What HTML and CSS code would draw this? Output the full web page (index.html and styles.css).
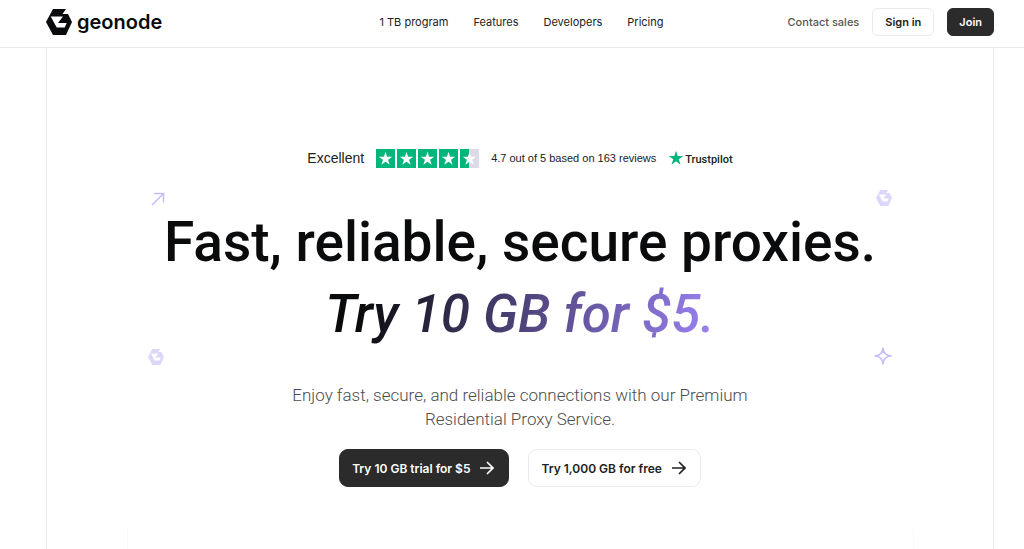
FILE: index.html
```html
<!DOCTYPE html>
<html lang="en">
<head>
<meta charset="utf-8">
<meta name="viewport" content="width=device-width, initial-scale=1">
<title>Geonode</title>
<link rel="stylesheet" href="styles.css">
</head>
<body>
<svg class="symbols" aria-hidden="true">
  <symbol id="mark" viewBox="0 0 26 26">
    <path fill="currentColor" fill-rule="evenodd" d="M7 0H20L16.500 5H22L26 13L20 26H7L0 13ZM4.700 7.500L10.700 18.500H18.700L20.700 14H12L17 7.500Z"/>
  </symbol>
  <symbol id="star" viewBox="0 0 20 20">
    <path fill="currentColor" d="M10 1l2.100 6.600H19l-5.600 4 2.200 6.700L10 14.200l-5.600 4.100 2.200-6.700L1 7.600h6.900Z"/>
  </symbol>
  <symbol id="arrow" viewBox="0 0 14 14">
    <path fill="none" stroke="currentColor" stroke-width="1.700" d="M0 7H13M7 1l6 6-6 6"/>
  </symbol>
</svg>
<header class="header">
  <div class="bar">
    <a class="brand" href="#"><svg class="brand-mark" aria-hidden="true"><use href="#mark"/></svg>geonode</a>
    <nav class="nav" aria-label="Main">
      <a href="#">1 TB program</a>
      <a href="#">Features</a>
      <a href="#">Developers</a>
      <a href="#">Pricing</a>
    </nav>
    <div class="account">
      <a class="contact" href="#">Contact sales</a>
      <button class="button small" type="button">Sign in</button>
      <button class="button small dark" type="button">Join</button>
    </div>
  </div>
</header>
<main class="frame">
  <div class="rating">
    <span class="verdict">Excellent</span>
    <span class="stars" role="img" aria-label="4.7 stars">
      <svg><use href="#star"/></svg><svg><use href="#star"/></svg><svg><use href="#star"/></svg><svg><use href="#star"/></svg><svg class="half"><use href="#star"/></svg>
    </span>
    <span class="score">4.7 out of 5 based on 163 reviews</span>
    <a class="trustpilot" href="#"><svg aria-hidden="true"><use href="#star"/></svg><span>Trustpilot</span></a>
  </div>
  <div class="hero">
    <svg class="deco top-left" viewBox="0 0 18 18" aria-hidden="true"><path fill="none" stroke="currentColor" stroke-width="1.500" d="M4 15L15 4M6 3.500h9.500v9"/></svg>
    <svg class="deco top-right" aria-hidden="true"><use href="#mark"/></svg>
    <svg class="deco bottom-left" aria-hidden="true"><use href="#mark"/></svg>
    <svg class="deco bottom-right" viewBox="0 0 18 18" aria-hidden="true"><path fill="none" stroke="currentColor" stroke-width="1.700" stroke-linejoin="round" d="M9 1Q9.500 8.500 17 9Q9.500 9.500 9 17Q8.500 9.500 1 9Q8.500 8.500 9 1Z"/></svg>
    <h1>Fast, reliable, secure proxies.<br><em>Try 10 GB for $5.</em></h1>
  </div>
  <p class="lead">Enjoy fast, secure, and reliable connections with our Premium Residential Proxy Service.</p>
  <div class="actions">
    <button class="button large dark" type="button">Try 10 GB trial for $5<svg aria-hidden="true"><use href="#arrow"/></svg></button>
    <button class="button large" type="button">Try 1,000 GB for free<svg aria-hidden="true"><use href="#arrow"/></svg></button>
  </div>
  <div class="panel"></div>
</main>
</body>
</html>
```
FILE: styles.css
```css
* { box-sizing: border-box; }
body {
  margin: 0;
  min-height: 100vh;
  display: flex;
  flex-direction: column;
  font-family: Inter, "Open Sans", sans-serif;
  color: #212121;
  background: #fff;
}
a { color: inherit; text-decoration: none; }
.symbols { position: absolute; width: 0; height: 0; }
.header { border-bottom: 1px solid #ebebeb; padding: 0 30px 0 46px; }
.bar {
  display: grid;
  grid-template-columns: 1fr auto 1fr;
  align-items: center;
  height: 47px;
  padding-bottom: 3px;
}
.brand {
  display: flex;
  align-items: center;
  gap: 5px;
  font-size: 20px;
  font-weight: 600;
  line-height: 24px;
  color: #090b0c;
}
.brand-mark { width: 26px; height: 26px; }
.nav { display: flex; gap: 25px; padding-left: 3px; font-size: 11px; line-height: 16px; }
.account { display: flex; justify-content: flex-end; align-items: center; gap: 13px; }
.contact { font-size: 11px; font-weight: 500; color: #555; }
.button {
  display: inline-flex;
  align-items: center;
  justify-content: center;
  font-family: inherit;
  font-weight: 600;
  color: #212121;
  background: #fff;
  border: 1px solid #ebebeb;
  border-radius: 6px;
  cursor: pointer;
  white-space: nowrap;
}
.dark { color: #fff; background: #2b2b2b; border-color: #2b2b2b; }
.small { height: 28px; padding: 0 12px; font-size: 11px; }
.small.dark { padding: 0 11px; }
.large { height: 38px; padding: 0 14px 0 12px; gap: 10px; font-size: 12px; border-radius: 9px; }
.large svg { width: 14px; height: 14px; }
.frame {
  flex: 1;
  display: flex;
  flex-direction: column;
  align-items: center;
  margin: 0 30px 0 46px;
  padding-top: 100px;
  border: solid #ebebeb;
  border-width: 0 1px;
}
.rating {
  display: flex;
  align-items: center;
  gap: 12px;
  height: 20px;
  font-family: "Liberation Sans", Arial, sans-serif;
}
.verdict { font-size: 14px; }
.stars { display: flex; gap: 2px; }
.stars svg { width: 19px; height: 19px; padding: 2px; color: #fff; background: #00b67a; }
.stars .half { background: linear-gradient(90deg, #00b67a 50%, #dcdce6 50%); }
.score { font-size: 11px; }
.trustpilot { display: flex; align-items: center; gap: 1px; font-family: Roboto, sans-serif; font-size: 11px; line-height: 16px; font-weight: 500; }
.trustpilot svg { width: 16px; height: 16px; color: #00b67a; }
.trustpilot span { padding-top: 3px; }
.hero { position: relative; width: 100%; max-width: 744px; margin-top: 39px; text-align: center; }
h1 { margin: 0; font-family: Roboto, sans-serif; font-size: 55px; line-height: 71px; font-weight: 500; color: #090b0c; white-space: nowrap; }
h1 em {
  display: inline-block;
  font-size: 53px;
  color: transparent;
  background: linear-gradient(100deg, #090b0c 10%, #463c6c 45%, #9c83f5 100%);
  background-clip: text;
  -webkit-background-clip: text;
}
.deco { position: absolute; width: 16px; height: 16px; color: #ddd6fa; }
.top-left { width: 18px; height: 18px; top: -17px; left: 0; color: #c8bcf8; }
.top-right { top: -17px; right: 0; }
.bottom-left { bottom: -15px; left: 0; }
.bottom-right { width: 18px; height: 18px; bottom: -15px; right: 0; color: #c8bcf8; }
.lead {
  max-width: 480px;
  margin: 33px 0 0;
  font-family: Roboto, sans-serif;
  font-size: 17px;
  line-height: 24px;
  font-weight: 300;
  text-align: center;
  color: #4d4d4d;
}
.actions { display: flex; gap: 19px; margin-top: 18px; }
.panel {
  flex: 1;
  width: 100%;
  max-width: 787px;
  margin-top: 42px;
  border: solid #f9f9f9;
  border-width: 0 1px;
}
```
